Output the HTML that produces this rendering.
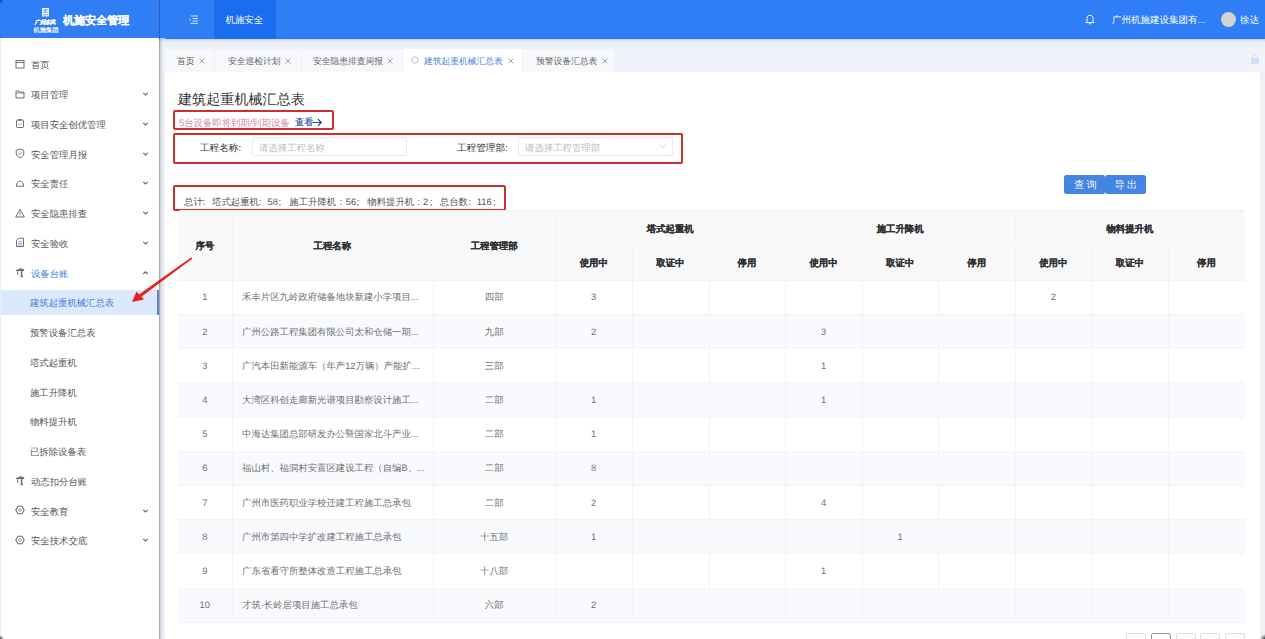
<!DOCTYPE html>
<html><head><meta charset="utf-8"><style>
*{box-sizing:border-box;margin:0;padding:0}
html,body{width:1265px;height:639px;overflow:hidden;background:#eef1f8;font-family:"Liberation Sans",sans-serif;color:#333;text-rendering:geometricPrecision}
.a{position:absolute;white-space:nowrap}
#hdr{position:absolute;left:0;top:0;width:1265px;height:38.5px;background:#2f7ef6}
#side{position:absolute;left:0;top:38px;width:159px;height:601px;background:#fff}
#sline{position:absolute;left:159px;top:0;width:1px;height:639px;background:rgba(40,50,70,0.38)}
#sshadow{position:absolute;left:160px;top:38px;width:5px;height:601px;background:linear-gradient(to right,#c9cdd6,#e6e9f0 50%,#f3f5f9)}
.mi{position:absolute;left:0;width:159px;height:25px;font-size:9.35px;color:#555;line-height:25px}
.mi .t{position:absolute;left:31px;top:1.5px}
.mi svg.ic{position:absolute;left:15px;top:7px}
.mi svg.ch{position:absolute;left:142px;top:9.5px}
.sub .t{left:30px}
.act{background:#dce8fb;color:#4a7fd8}
.act::after{content:"";position:absolute;right:0;top:0;width:2px;height:25px;background:#5f82c8}
#card{position:absolute;left:165px;top:72px;width:1095px;height:567px;background:#fff;border-radius:0 4px 0 0}
.tab{position:absolute;top:49px;height:23px;background:#f7f8fb;font-size:9.5px;color:#666;line-height:24px;white-space:nowrap}
.tab .t{position:absolute;top:0}
.tab .x{position:absolute;top:0;font-size:10px;color:#999}
.redbox{position:absolute;border:2px solid #c8312c;border-radius:2px}
</style></head><body>
<div id="hdr">
<svg class="a" style="left:32px;top:7px" width="28" height="27" viewBox="0 0 28 27">
<rect x="10" y="1" width="7" height="8.5" fill="#e8f1ff"/>
<path d="M11.2 3h4.6M13.5 2v3.5M11.5 5.3h4M11 7.8h5" stroke="#5b95ee" stroke-width="0.8"/>
<text x="13" y="17" font-size="5.3" fill="#f2f7ff" stroke="#f2f7ff" stroke-width="0.35" text-anchor="middle" font-style="italic" font-weight="bold" letter-spacing="-0.2">广州东凤</text>
<text x="14" y="24.8" font-size="6.3" fill="#f4f8ff" text-anchor="middle" font-weight="bold" letter-spacing="-0.1">机施集团</text>
</svg>
<div class="a" style="left:63px;top:13px;font-size:11.05px;font-weight:bold;color:#fff;line-height:16px;-webkit-text-stroke:0.2px #fff">机施安全管理</div>
<svg class="a" style="left:189px;top:15px" width="10" height="9" viewBox="0 0 10 9">
<path d="M1.5 1h7.5M3.5 3.5h5.5M3.5 6h5.5M1.5 8.3h7.5" stroke="#e6efff" stroke-width="0.9"/>
<path d="M0.6 3.6l1.6 1.1L0.6 5.8z" fill="#e6efff"/></svg>
<div class="a" style="left:214px;top:0;width:62px;height:38.5px;background:#1a6cf1"></div>
<div class="a" style="left:225.5px;top:13px;font-size:9.4px;color:#fff;line-height:14px">机施安全</div>
<svg class="a" style="left:1085px;top:14px" width="10" height="11" viewBox="0 0 10 11">
<path d="M5 1.2c-2 0-3 1.5-3 3.3v2.8L1 8.6h8L8 7.3V4.5C8 2.7 7 1.2 5 1.2z" fill="none" stroke="#fff" stroke-width="1"/>
<path d="M4 9.8h2" stroke="#fff" stroke-width="1"/></svg>
<div class="a" style="left:1112px;top:14px;font-size:9.5px;color:#fff;line-height:14px">广州机施建设集团有...</div>
<div class="a" style="left:1221px;top:12px;width:15px;height:15px;border-radius:50%;background:#d6d1d1"></div>
<div class="a" style="left:1240px;top:14px;font-size:9.5px;color:#fff;line-height:14px">徐达</div>
</div>
<div id="side"></div>
<div class="mi" style="top:51.80px">
<svg class="ic" width="10" height="11" viewBox="0 0 10 11"><rect x="1" y="1.5" width="8" height="7.5" fill="none" stroke="#6b6e75" stroke-width="1"/><path d="M1 3.5h8" stroke="#6b6e75" stroke-width="1"/></svg>
<span class="t">首页</span>
</div>
<div class="mi" style="top:81.55px">
<svg class="ic" width="10" height="11" viewBox="0 0 10 11"><path d="M1 2h3l1 1.2h4v5.8H1z" fill="none" stroke="#6b6e75" stroke-width="1"/><path d="M1 4h8" stroke="#6b6e75" stroke-width="0.8"/></svg>
<span class="t">项目管理</span>
<svg class="ch" width="7" height="6" viewBox="0 0 7 6"><path d="M1.3 1.8l2.2 2.2 2.2-2.2" fill="none" stroke="#666" stroke-width="1.1"/></svg>
</div>
<div class="mi" style="top:111.30px">
<svg class="ic" width="10" height="11" viewBox="0 0 10 11"><rect x="1.5" y="2" width="7" height="7.5" rx="0.8" fill="none" stroke="#6b6e75" stroke-width="1"/><rect x="3.5" y="1" width="3" height="1.8" fill="#6b6e75"/><path d="M3.2 5.8l1.3 1.2 2.3-2.3" fill="none" stroke="#6e8ed0" stroke-width="0.9"/></svg>
<span class="t">项目安全创优管理</span>
<svg class="ch" width="7" height="6" viewBox="0 0 7 6"><path d="M1.3 1.8l2.2 2.2 2.2-2.2" fill="none" stroke="#666" stroke-width="1.1"/></svg>
</div>
<div class="mi" style="top:141.05px">
<svg class="ic" width="10" height="11" viewBox="0 0 10 11"><path d="M5 1l3.8 1.4v3C8.8 7.6 7 9 5 9.8 3 9 1.2 7.6 1.2 5.4v-3z" fill="none" stroke="#6b6e75" stroke-width="1"/><path d="M3.5 5.3l1.2 1.1 1.9-2" fill="none" stroke="#6b6e75" stroke-width="0.9"/></svg>
<span class="t">安全管理月报</span>
<svg class="ch" width="7" height="6" viewBox="0 0 7 6"><path d="M1.3 1.8l2.2 2.2 2.2-2.2" fill="none" stroke="#666" stroke-width="1.1"/></svg>
</div>
<div class="mi" style="top:170.80px">
<svg class="ic" width="10" height="11" viewBox="0 0 10 11"><path d="M1 8.2h8M1.5 8C1.5 5 3 3 5 3s3.5 2 3.5 5" fill="none" stroke="#6b6e75" stroke-width="1"/></svg>
<span class="t">安全责任</span>
<svg class="ch" width="7" height="6" viewBox="0 0 7 6"><path d="M1.3 1.8l2.2 2.2 2.2-2.2" fill="none" stroke="#666" stroke-width="1.1"/></svg>
</div>
<div class="mi" style="top:200.55px">
<svg class="ic" width="10" height="11" viewBox="0 0 10 11"><path d="M5 1.3L9.3 9H0.7z" fill="none" stroke="#6b6e75" stroke-width="1"/><path d="M5 4v2.6M5 7.4v0.8" stroke="#6b6e75" stroke-width="0.9"/></svg>
<span class="t">安全隐患排查</span>
<svg class="ch" width="7" height="6" viewBox="0 0 7 6"><path d="M1.3 1.8l2.2 2.2 2.2-2.2" fill="none" stroke="#666" stroke-width="1.1"/></svg>
</div>
<div class="mi" style="top:230.30px">
<svg class="ic" width="10" height="11" viewBox="0 0 10 11"><path d="M3.5 1.2h5v8.3h-7V3.2z" fill="none" stroke="#6b6e75" stroke-width="1"/><path d="M3.2 4.3h4M3 6.3h4.2M3 8h4.2" stroke="#8aa0cc" stroke-width="0.9"/></svg>
<span class="t">安全验收</span>
<svg class="ch" width="7" height="6" viewBox="0 0 7 6"><path d="M1.3 1.8l2.2 2.2 2.2-2.2" fill="none" stroke="#666" stroke-width="1.1"/></svg>
</div>
<div class="mi" style="top:260.05px;color:#4a7fd8">
<svg class="ic" width="10" height="11" viewBox="0 0 10 11"><path d="M0.8 3.2L5.8 1.2L9.2 2.4V4H0.8z" fill="#6b6e75"/><path d="M6.6 2v7.3M5.6 9.4h2.4" stroke="#6b6e75" stroke-width="1.5" fill="none"/><path d="M2.6 4v4" stroke="#8497c4" stroke-width="1.3"/></svg>
<span class="t">设备台账</span>
<svg class="ch" width="7" height="6" viewBox="0 0 7 6"><path d="M1.3 4l2.2-2.2 2.2 2.2" fill="none" stroke="#666" stroke-width="1.1"/></svg>
</div>
<div class="mi sub act" style="top:289.80px">
<span class="t">建筑起重机械汇总表</span>
</div>
<div class="mi sub" style="top:319.55px">
<span class="t">预警设备汇总表</span>
</div>
<div class="mi sub" style="top:349.30px">
<span class="t">塔式起重机</span>
</div>
<div class="mi sub" style="top:379.05px">
<span class="t">施工升降机</span>
</div>
<div class="mi sub" style="top:408.80px">
<span class="t">物料提升机</span>
</div>
<div class="mi sub" style="top:438.55px">
<span class="t">已拆除设备表</span>
</div>
<div class="mi" style="top:468.30px">
<svg class="ic" width="10" height="11" viewBox="0 0 10 11"><path d="M0.8 3.2L5.8 1.2L9.2 2.4V4H0.8z" fill="#6b6e75"/><path d="M6.6 2v7.3M5.6 9.4h2.4" stroke="#6b6e75" stroke-width="1.5" fill="none"/><path d="M2.6 4v4" stroke="#8497c4" stroke-width="1.3"/></svg>
<span class="t">动态扣分台账</span>
</div>
<div class="mi" style="top:498.05px">
<svg class="ic" width="10" height="11" viewBox="0 0 10 11"><path d="M3 1.2h4l2.2 3.8L7 8.8H3L0.8 5z" fill="none" stroke="#6b6e75" stroke-width="1.1" stroke-linejoin="round"/><circle cx="5" cy="5" r="1.3" fill="none" stroke="#7f90b8" stroke-width="0.9"/></svg>
<span class="t">安全教育</span>
<svg class="ch" width="7" height="6" viewBox="0 0 7 6"><path d="M1.3 1.8l2.2 2.2 2.2-2.2" fill="none" stroke="#666" stroke-width="1.1"/></svg>
</div>
<div class="mi" style="top:527.80px">
<svg class="ic" width="10" height="11" viewBox="0 0 10 11"><path d="M3 1.2h4l2.2 3.8L7 8.8H3L0.8 5z" fill="none" stroke="#6b6e75" stroke-width="1.1" stroke-linejoin="round"/><circle cx="5" cy="5" r="1.3" fill="none" stroke="#7f90b8" stroke-width="0.9"/></svg>
<span class="t">安全技术交底</span>
<svg class="ch" width="7" height="6" viewBox="0 0 7 6"><path d="M1.3 1.8l2.2 2.2 2.2-2.2" fill="none" stroke="#666" stroke-width="1.1"/></svg>
</div>
<div id="card"></div>
<div id="sshadow"></div>
<div class="a" style="left:159px;top:38px;width:1106px;height:5px;background:linear-gradient(to bottom,rgba(60,130,240,0.28),rgba(238,241,248,0))"></div>
<div class="tab" style="left:165px;width:49px;background:#f7f8fb"></div>
<div class="a" style="left:177px;top:55px;font-size:8.75px;line-height:12px;color:#666">首页</div>
<svg class="a" style="left:199px;top:58px" width="6" height="6" viewBox="0 0 6 6"><path d="M0.6 0.6l4.8 4.8M5.4 0.6l-4.8 4.8" stroke="#8a8a8a" stroke-width="0.75"/></svg>
<div class="tab" style="left:215px;width:86px;background:#f7f8fb"></div>
<div class="a" style="left:228px;top:55px;font-size:8.75px;line-height:12px;color:#666">安全巡检计划</div>
<svg class="a" style="left:285px;top:58px" width="6" height="6" viewBox="0 0 6 6"><path d="M0.6 0.6l4.8 4.8M5.4 0.6l-4.8 4.8" stroke="#8a8a8a" stroke-width="0.75"/></svg>
<div class="tab" style="left:302px;width:100px;background:#f7f8fb"></div>
<div class="a" style="left:313px;top:55px;font-size:8.75px;line-height:12px;color:#666">安全隐患排查周报</div>
<svg class="a" style="left:387px;top:58px" width="6" height="6" viewBox="0 0 6 6"><path d="M0.6 0.6l4.8 4.8M5.4 0.6l-4.8 4.8" stroke="#8a8a8a" stroke-width="0.75"/></svg>
<div class="tab" style="left:403px;width:119px;background:#fff"></div>
<div class="a" style="left:424px;top:55px;font-size:8.75px;line-height:12px;color:#4a7fd8">建筑起重机械汇总表</div>
<svg class="a" style="left:508px;top:58px" width="6" height="6" viewBox="0 0 6 6"><path d="M0.6 0.6l4.8 4.8M5.4 0.6l-4.8 4.8" stroke="#8a8a8a" stroke-width="0.75"/></svg>
<svg class="a" style="left:411px;top:56px" width="8" height="8" viewBox="0 0 8 8"><circle cx="4" cy="4" r="3.2" fill="none" stroke="#a9c4ee" stroke-width="1"/></svg>
<div class="tab" style="left:523px;width:92px;background:#f7f8fb"></div>
<div class="a" style="left:536px;top:55px;font-size:8.75px;line-height:12px;color:#666">预警设备汇总表</div>
<svg class="a" style="left:602px;top:58px" width="6" height="6" viewBox="0 0 6 6"><path d="M0.6 0.6l4.8 4.8M5.4 0.6l-4.8 4.8" stroke="#8a8a8a" stroke-width="0.75"/></svg>
<div class="a" style="left:1248px;top:48px;width:17px;height:24px;background:#f1f3fa"></div>
<svg class="a" style="left:1250px;top:54px" width="10" height="11" viewBox="0 0 10 11"><path d="M3 4V3a2 2 0 0 1 4 0v1" fill="none" stroke="#d9e6f8" stroke-width="1.3"/><rect x="1" y="4" width="8" height="6" rx="0.8" fill="#cde0f8"/></svg>
<div class="a" style="left:0;top:0;width:4px;height:4px;background:radial-gradient(circle at 0 0,#0b3f9a,rgba(47,126,246,0) 4px)"></div>
<div class="a" style="left:178px;top:90px;font-size:14.1px;line-height:18px;color:#333">建筑起重机械汇总表</div>
<div class="redbox" style="left:173px;top:110px;width:161px;height:20px"></div>
<div class="a" style="left:179px;top:116.5px;font-size:9.37px;line-height:12px;color:#d98a9c">5台设备即将到期/到期设备</div>
<div class="a" style="left:295px;top:116px;font-size:9.2px;line-height:12px;color:#2a4fa6;-webkit-text-stroke:0.1px #2a4fa6">查看</div>
<svg class="a" style="left:312px;top:117.5px" width="11" height="9" viewBox="0 0 11 9"><path d="M0.5 4.5h8.5M6 1.2l3.3 3.3L6 7.8" fill="none" stroke="#2a3f86" stroke-width="1.2"/></svg>
<div class="redbox" style="left:173px;top:133px;width:510px;height:31px"></div>
<div class="a" style="left:200px;top:142.5px;font-size:9.6px;line-height:12px;color:#333">工程名称:</div>
<div class="a" style="left:252px;top:137px;width:155px;height:19px;border:1px solid #e9ebef;border-radius:2px;background:#fff"></div>
<div class="a" style="left:259px;top:141.5px;font-size:9.4px;line-height:12px;color:#b8bcc3">请选择工程名称</div>
<div class="a" style="left:457px;top:142.5px;font-size:9.6px;line-height:12px;color:#333">工程管理部:</div>
<div class="a" style="left:518px;top:137px;width:155px;height:19px;border:1px solid #e9ebef;border-radius:2px;background:#fff"></div>
<div class="a" style="left:525px;top:141.5px;font-size:9.4px;line-height:12px;color:#b8bcc3">请选择工程管理部</div>
<svg class="a" style="left:659px;top:144px" width="7" height="5" viewBox="0 0 7 5"><path d="M0.5 1l3 3 3-3" fill="none" stroke="#c0c4cc" stroke-width="0.8"/></svg>
<div class="a" style="left:1064.3px;top:174.6px;width:41px;height:19px;background:#4585e2;border-radius:2.5px"></div>
<div class="a" style="left:1105px;top:174.6px;width:40.7px;height:19px;background:#4585e2;border-radius:2.5px"></div>
<div class="a" style="left:1074px;top:179.7px;font-size:10.2px;line-height:12px;color:#f4f8ff;letter-spacing:2.3px">查询</div>
<div class="a" style="left:1114.5px;top:179.7px;font-size:10.2px;line-height:12px;color:#f4f8ff;letter-spacing:2.3px">导出</div>
<div class="redbox" style="left:173px;top:184.7px;width:333px;height:26.5px"></div>
<div class="a" style="left:184.0px;top:196px;font-size:9.4px;line-height:12px;color:#555">总计</div>
<div class="a" style="left:202.6px;top:196px;font-size:9.4px;line-height:12px;color:#555">:</div>
<div class="a" style="left:212.0px;top:196px;font-size:9.4px;line-height:12px;color:#555">塔式起重机</div>
<div class="a" style="left:258.8px;top:196px;font-size:9.4px;line-height:12px;color:#555">:</div>
<div class="a" style="left:267.6px;top:196px;font-size:9.4px;line-height:12px;color:#555">58</div>
<div class="a" style="left:278.5px;top:196px;font-size:9.4px;line-height:12px;color:#555">;</div>
<div class="a" style="left:289.3px;top:196px;font-size:9.4px;line-height:12px;color:#555">施工升降机</div>
<div class="a" style="left:339.6px;top:196px;font-size:9.4px;line-height:12px;color:#555">:</div>
<div class="a" style="left:345.8px;top:196px;font-size:9.4px;line-height:12px;color:#555">56</div>
<div class="a" style="left:356.5px;top:196px;font-size:9.4px;line-height:12px;color:#555">;</div>
<div class="a" style="left:367.3px;top:196px;font-size:9.4px;line-height:12px;color:#555">物料提升机</div>
<div class="a" style="left:417.6px;top:196px;font-size:9.4px;line-height:12px;color:#555">:</div>
<div class="a" style="left:423.0px;top:196px;font-size:9.4px;line-height:12px;color:#555">2</div>
<div class="a" style="left:429.8px;top:196px;font-size:9.4px;line-height:12px;color:#555">;</div>
<div class="a" style="left:439.8px;top:196px;font-size:9.4px;line-height:12px;color:#555">总台数</div>
<div class="a" style="left:468.6px;top:196px;font-size:9.4px;line-height:12px;color:#555">:</div>
<div class="a" style="left:476.8px;top:196px;font-size:9.4px;line-height:12px;color:#555">116</div>
<div class="a" style="left:493.0px;top:196px;font-size:9.4px;line-height:12px;color:#555">;</div>
<div class="a" style="left:178.00px;top:210.30px;width:1066.50px;height:412.50px;border-radius:4px 4px 0 0;overflow:hidden">
<div class="a" style="left:0.00px;top:0.00px;width:1066.50px;height:69.50px;background:#f9f9fa"></div>
<div class="a" style="left:0.00px;top:103.70px;width:1066.50px;height:34.20px;background:#f9fafd"></div>
<div class="a" style="left:0.00px;top:172.10px;width:1066.50px;height:34.20px;background:#f9fafd"></div>
<div class="a" style="left:0.00px;top:240.50px;width:1066.50px;height:34.20px;background:#f9fafd"></div>
<div class="a" style="left:0.00px;top:308.90px;width:1066.50px;height:34.20px;background:#f9fafd"></div>
<div class="a" style="left:0.00px;top:377.30px;width:1066.50px;height:34.20px;background:#f9fafd"></div>
<div class="a" style="left:0.00px;top:0.00px;width:1066.50px;height:1.50px;background:#f1f2f5"></div>
<div class="a" style="left:377.50px;top:34.70px;width:689.00px;height:1.00px;background:#f3f4f7"></div>
<div class="a" style="left:0.00px;top:69.50px;width:1066.50px;height:1.00px;background:#f3f4f7"></div>
<div class="a" style="left:0.00px;top:103.70px;width:1066.50px;height:1.00px;background:#f3f4f7"></div>
<div class="a" style="left:0.00px;top:137.90px;width:1066.50px;height:1.00px;background:#f3f4f7"></div>
<div class="a" style="left:0.00px;top:172.10px;width:1066.50px;height:1.00px;background:#f3f4f7"></div>
<div class="a" style="left:0.00px;top:206.30px;width:1066.50px;height:1.00px;background:#f3f4f7"></div>
<div class="a" style="left:0.00px;top:240.50px;width:1066.50px;height:1.00px;background:#f3f4f7"></div>
<div class="a" style="left:0.00px;top:274.70px;width:1066.50px;height:1.00px;background:#f3f4f7"></div>
<div class="a" style="left:0.00px;top:308.90px;width:1066.50px;height:1.00px;background:#f3f4f7"></div>
<div class="a" style="left:0.00px;top:343.10px;width:1066.50px;height:1.00px;background:#f3f4f7"></div>
<div class="a" style="left:0.00px;top:377.30px;width:1066.50px;height:1.00px;background:#f3f4f7"></div>
<div class="a" style="left:0.00px;top:411.50px;width:1066.50px;height:1.00px;background:#f3f4f7"></div>
<div class="a" style="left:53.50px;top:0.00px;width:1.00px;height:411.50px;background:#f3f4f7"></div>
<div class="a" style="left:255.00px;top:0.00px;width:1.00px;height:411.50px;background:#f3f4f7"></div>
<div class="a" style="left:377.30px;top:0.00px;width:1.00px;height:411.50px;background:#f3f4f7"></div>
<div class="a" style="left:454.08px;top:34.70px;width:1.00px;height:376.80px;background:#f3f4f7"></div>
<div class="a" style="left:530.66px;top:34.70px;width:1.00px;height:376.80px;background:#f3f4f7"></div>
<div class="a" style="left:607.23px;top:0.00px;width:1.00px;height:411.50px;background:#f3f4f7"></div>
<div class="a" style="left:683.81px;top:34.70px;width:1.00px;height:376.80px;background:#f3f4f7"></div>
<div class="a" style="left:760.39px;top:34.70px;width:1.00px;height:376.80px;background:#f3f4f7"></div>
<div class="a" style="left:836.97px;top:0.00px;width:1.00px;height:411.50px;background:#f3f4f7"></div>
<div class="a" style="left:913.54px;top:34.70px;width:1.00px;height:376.80px;background:#f3f4f7"></div>
<div class="a" style="left:990.12px;top:34.70px;width:1.00px;height:376.80px;background:#f3f4f7"></div>
</div>
<div class="a" style="left:204.75px;top:239.05px;width:200px;margin-left:-100px;text-align:center;font-size:9.4px;line-height:14px;color:#303133;font-weight:bold;-webkit-text-stroke:0.15px #303133">序号</div>
<div class="a" style="left:332.25px;top:239.05px;width:200px;margin-left:-100px;text-align:center;font-size:9.4px;line-height:14px;color:#303133;font-weight:bold;-webkit-text-stroke:0.15px #303133">工程名称</div>
<div class="a" style="left:494.15px;top:239.05px;width:200px;margin-left:-100px;text-align:center;font-size:9.4px;line-height:14px;color:#303133;font-weight:bold;-webkit-text-stroke:0.15px #303133">工程管理部</div>
<div class="a" style="left:670.27px;top:222.15px;width:200px;margin-left:-100px;text-align:center;font-size:9.4px;line-height:14px;color:#303133;font-weight:bold;-webkit-text-stroke:0.15px #303133">塔式起重机</div>
<div class="a" style="left:593.69px;top:256.40px;width:200px;margin-left:-100px;text-align:center;font-size:9.4px;line-height:14px;color:#303133;font-weight:bold;-webkit-text-stroke:0.15px #303133">使用中</div>
<div class="a" style="left:670.37px;top:256.40px;width:200px;margin-left:-100px;text-align:center;font-size:9.4px;line-height:14px;color:#303133;font-weight:bold;-webkit-text-stroke:0.15px #303133">取证中</div>
<div class="a" style="left:746.94px;top:256.40px;width:200px;margin-left:-100px;text-align:center;font-size:9.4px;line-height:14px;color:#303133;font-weight:bold;-webkit-text-stroke:0.15px #303133">停用</div>
<div class="a" style="left:900.10px;top:222.15px;width:200px;margin-left:-100px;text-align:center;font-size:9.4px;line-height:14px;color:#303133;font-weight:bold;-webkit-text-stroke:0.15px #303133">施工升降机</div>
<div class="a" style="left:823.52px;top:256.40px;width:200px;margin-left:-100px;text-align:center;font-size:9.4px;line-height:14px;color:#303133;font-weight:bold;-webkit-text-stroke:0.15px #303133">使用中</div>
<div class="a" style="left:900.10px;top:256.40px;width:200px;margin-left:-100px;text-align:center;font-size:9.4px;line-height:14px;color:#303133;font-weight:bold;-webkit-text-stroke:0.15px #303133">取证中</div>
<div class="a" style="left:976.68px;top:256.40px;width:200px;margin-left:-100px;text-align:center;font-size:9.4px;line-height:14px;color:#303133;font-weight:bold;-webkit-text-stroke:0.15px #303133">停用</div>
<div class="a" style="left:1129.83px;top:222.15px;width:200px;margin-left:-100px;text-align:center;font-size:9.4px;line-height:14px;color:#303133;font-weight:bold;-webkit-text-stroke:0.15px #303133">物料提升机</div>
<div class="a" style="left:1053.26px;top:256.40px;width:200px;margin-left:-100px;text-align:center;font-size:9.4px;line-height:14px;color:#303133;font-weight:bold;-webkit-text-stroke:0.15px #303133">使用中</div>
<div class="a" style="left:1129.83px;top:256.40px;width:200px;margin-left:-100px;text-align:center;font-size:9.4px;line-height:14px;color:#303133;font-weight:bold;-webkit-text-stroke:0.15px #303133">取证中</div>
<div class="a" style="left:1206.41px;top:256.40px;width:200px;margin-left:-100px;text-align:center;font-size:9.4px;line-height:14px;color:#303133;font-weight:bold;-webkit-text-stroke:0.15px #303133">停用</div>
<div class="a" style="left:204.75px;top:290.40px;width:200px;margin-left:-100px;text-align:center;font-size:9.4px;line-height:14px;color:#707070">1</div>
<div class="a" style="left:242.00px;top:290.40px;font-size:9.4px;line-height:14px;color:#707070">禾丰片区九岭政府储备地块新建小学项目...</div>
<div class="a" style="left:494.15px;top:290.40px;width:200px;margin-left:-100px;text-align:center;font-size:9.4px;line-height:14px;color:#707070">四部</div>
<div class="a" style="left:593.69px;top:290.40px;width:200px;margin-left:-100px;text-align:center;font-size:9.4px;line-height:14px;color:#707070">3</div>
<div class="a" style="left:1053.26px;top:290.40px;width:200px;margin-left:-100px;text-align:center;font-size:9.4px;line-height:14px;color:#707070">2</div>
<div class="a" style="left:204.75px;top:324.60px;width:200px;margin-left:-100px;text-align:center;font-size:9.4px;line-height:14px;color:#707070">2</div>
<div class="a" style="left:242.00px;top:324.60px;font-size:9.4px;line-height:14px;color:#707070">广州公路工程集团有限公司太和仓储一期...</div>
<div class="a" style="left:494.15px;top:324.60px;width:200px;margin-left:-100px;text-align:center;font-size:9.4px;line-height:14px;color:#707070">九部</div>
<div class="a" style="left:593.69px;top:324.60px;width:200px;margin-left:-100px;text-align:center;font-size:9.4px;line-height:14px;color:#707070">2</div>
<div class="a" style="left:823.52px;top:324.60px;width:200px;margin-left:-100px;text-align:center;font-size:9.4px;line-height:14px;color:#707070">3</div>
<div class="a" style="left:204.75px;top:358.80px;width:200px;margin-left:-100px;text-align:center;font-size:9.4px;line-height:14px;color:#707070">3</div>
<div class="a" style="left:242.00px;top:358.80px;font-size:9.4px;line-height:14px;color:#707070">广汽本田新能源车（年产12万辆）产能扩...</div>
<div class="a" style="left:494.15px;top:358.80px;width:200px;margin-left:-100px;text-align:center;font-size:9.4px;line-height:14px;color:#707070">三部</div>
<div class="a" style="left:823.52px;top:358.80px;width:200px;margin-left:-100px;text-align:center;font-size:9.4px;line-height:14px;color:#707070">1</div>
<div class="a" style="left:204.75px;top:393.00px;width:200px;margin-left:-100px;text-align:center;font-size:9.4px;line-height:14px;color:#707070">4</div>
<div class="a" style="left:242.00px;top:393.00px;font-size:9.4px;line-height:14px;color:#707070">大湾区科创走廊新光谱项目勘察设计施工...</div>
<div class="a" style="left:494.15px;top:393.00px;width:200px;margin-left:-100px;text-align:center;font-size:9.4px;line-height:14px;color:#707070">二部</div>
<div class="a" style="left:593.69px;top:393.00px;width:200px;margin-left:-100px;text-align:center;font-size:9.4px;line-height:14px;color:#707070">1</div>
<div class="a" style="left:823.52px;top:393.00px;width:200px;margin-left:-100px;text-align:center;font-size:9.4px;line-height:14px;color:#707070">1</div>
<div class="a" style="left:204.75px;top:427.20px;width:200px;margin-left:-100px;text-align:center;font-size:9.4px;line-height:14px;color:#707070">5</div>
<div class="a" style="left:242.00px;top:427.20px;font-size:9.4px;line-height:14px;color:#707070">中海达集团总部研发办公暨国家北斗产业...</div>
<div class="a" style="left:494.15px;top:427.20px;width:200px;margin-left:-100px;text-align:center;font-size:9.4px;line-height:14px;color:#707070">二部</div>
<div class="a" style="left:593.69px;top:427.20px;width:200px;margin-left:-100px;text-align:center;font-size:9.4px;line-height:14px;color:#707070">1</div>
<div class="a" style="left:204.75px;top:461.40px;width:200px;margin-left:-100px;text-align:center;font-size:9.4px;line-height:14px;color:#707070">6</div>
<div class="a" style="left:242.00px;top:461.40px;font-size:9.4px;line-height:14px;color:#707070">福山村、福洞村安置区建设工程（自编B、...</div>
<div class="a" style="left:494.15px;top:461.40px;width:200px;margin-left:-100px;text-align:center;font-size:9.4px;line-height:14px;color:#707070">二部</div>
<div class="a" style="left:593.69px;top:461.40px;width:200px;margin-left:-100px;text-align:center;font-size:9.4px;line-height:14px;color:#707070">8</div>
<div class="a" style="left:204.75px;top:495.60px;width:200px;margin-left:-100px;text-align:center;font-size:9.4px;line-height:14px;color:#707070">7</div>
<div class="a" style="left:242.00px;top:495.60px;font-size:9.4px;line-height:14px;color:#707070">广州市医药职业学校迁建工程施工总承包</div>
<div class="a" style="left:494.15px;top:495.60px;width:200px;margin-left:-100px;text-align:center;font-size:9.4px;line-height:14px;color:#707070">二部</div>
<div class="a" style="left:593.69px;top:495.60px;width:200px;margin-left:-100px;text-align:center;font-size:9.4px;line-height:14px;color:#707070">2</div>
<div class="a" style="left:823.52px;top:495.60px;width:200px;margin-left:-100px;text-align:center;font-size:9.4px;line-height:14px;color:#707070">4</div>
<div class="a" style="left:204.75px;top:529.80px;width:200px;margin-left:-100px;text-align:center;font-size:9.4px;line-height:14px;color:#707070">8</div>
<div class="a" style="left:242.00px;top:529.80px;font-size:9.4px;line-height:14px;color:#707070">广州市第四中学扩改建工程施工总承包</div>
<div class="a" style="left:494.15px;top:529.80px;width:200px;margin-left:-100px;text-align:center;font-size:9.4px;line-height:14px;color:#707070">十五部</div>
<div class="a" style="left:593.69px;top:529.80px;width:200px;margin-left:-100px;text-align:center;font-size:9.4px;line-height:14px;color:#707070">1</div>
<div class="a" style="left:900.10px;top:529.80px;width:200px;margin-left:-100px;text-align:center;font-size:9.4px;line-height:14px;color:#707070">1</div>
<div class="a" style="left:204.75px;top:564.00px;width:200px;margin-left:-100px;text-align:center;font-size:9.4px;line-height:14px;color:#707070">9</div>
<div class="a" style="left:242.00px;top:564.00px;font-size:9.4px;line-height:14px;color:#707070">广东省看守所整体改造工程施工总承包</div>
<div class="a" style="left:494.15px;top:564.00px;width:200px;margin-left:-100px;text-align:center;font-size:9.4px;line-height:14px;color:#707070">十八部</div>
<div class="a" style="left:823.52px;top:564.00px;width:200px;margin-left:-100px;text-align:center;font-size:9.4px;line-height:14px;color:#707070">1</div>
<div class="a" style="left:204.75px;top:598.20px;width:200px;margin-left:-100px;text-align:center;font-size:9.4px;line-height:14px;color:#707070">10</div>
<div class="a" style="left:242.00px;top:598.20px;font-size:9.4px;line-height:14px;color:#707070">才筑·长岭居项目施工总承包</div>
<div class="a" style="left:494.15px;top:598.20px;width:200px;margin-left:-100px;text-align:center;font-size:9.4px;line-height:14px;color:#707070">六部</div>
<div class="a" style="left:593.69px;top:598.20px;width:200px;margin-left:-100px;text-align:center;font-size:9.4px;line-height:14px;color:#707070">2</div>
<div class="a" style="left:1126px;top:633px;width:20px;height:20px;border:1px solid #dcdfe6;border-radius:2px;background:#fff"></div>
<div class="a" style="left:1151px;top:633px;width:20px;height:20px;border:1px solid #8f96a3;border-radius:2px;background:#fff"></div>
<div class="a" style="left:1176px;top:633px;width:20px;height:20px;border:1px solid #dcdfe6;border-radius:2px;background:#fff"></div>
<div class="a" style="left:1200px;top:633px;width:20px;height:20px;border:1px solid #dcdfe6;border-radius:2px;background:#fff"></div>
<div class="a" style="left:1225px;top:633px;width:20px;height:20px;border:1px solid #dcdfe6;border-radius:2px;background:#fff"></div>
<svg class="a" style="left:0;top:0" width="200" height="320" viewBox="0 0 200 320"><path d="M192.5 258.5L191 257.5L139 294.5L141 297z" fill="#e5231b"/><path d="M132 302l4.5-10.5 7.5 8z" fill="#e5231b"/></svg>
<div id="sline"></div>
<div class="a" style="left:0;top:38px;width:1px;height:601px;background:#ececec"></div>
<div class="a" style="left:0;top:631px;width:8px;height:8px;background:radial-gradient(circle at 0 100%,#333 0,rgba(255,255,255,0) 4px)"></div>
<div class="a" style="left:1259px;top:631px;width:6px;height:8px;background:radial-gradient(circle at 100% 100%,#333 0,rgba(255,255,255,0) 5px)"></div>
</body></html>
